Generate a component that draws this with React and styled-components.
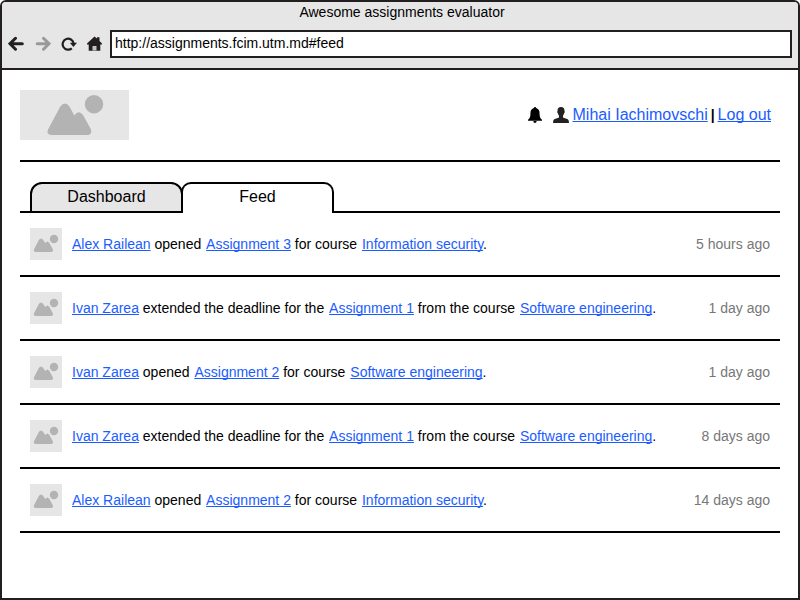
import React from "react";
import styled, { createGlobalStyle } from "styled-components";

const ink = "#231f20";
const shade = "#e6e6e6";

const GlobalStyle = createGlobalStyle`
  *, *::before, *::after { box-sizing: border-box; }
  body {
    margin: 0;
    background: #fff;
    color: #000;
    font: 14px/20px "Liberation Sans", Arial, sans-serif;
  }
`;

const BrowserWindow = styled.div`
  display: flex;
  flex-direction: column;
  min-height: 100vh;
  border: 2px solid ${ink};
  border-radius: 6px 6px 0 0;
  overflow: hidden;
`;

const Chrome = styled.header`
  padding-bottom: 10px;
  background: ${shade};
  border-bottom: 2px solid ${ink};
`;

const WindowTitle = styled.div`
  height: 28px;
  padding-left: 4px;
  text-align: center;
`;

const Toolbar = styled.div`
  display: flex;
  align-items: center;
  gap: 8px;
  padding: 0 6px;
`;

const Buttons = styled.div`
  display: flex;
  gap: 10px;
`;

const ToolButton = styled.button`
  display: flex;
  padding: 0;
  border: 0;
  background: none;
  color: ${({ $muted }) => ($muted ? "#999" : ink)};
`;

const Address = styled.input`
  flex: 1;
  min-width: 0;
  height: 28px;
  padding: 0 3px 2px;
  border: 2px solid ${ink};
  border-radius: 0;
  background: #fff;
  color: #000;
  font: inherit;
`;

const Page = styled.main`
  flex: 1;
  padding: 20px 18px;
`;

const Masthead = styled.div`
  display: flex;
  justify-content: space-between;
  align-items: center;
  padding: 0 9px 20px 0;
  border-bottom: 2px solid #000;
`;

const Picture = styled.svg`
  display: block;
  flex: none;
  background: ${shade};
  fill: #b3b3b3;
`;

const Account = styled.nav`
  display: flex;
  align-items: center;
  gap: 10px;
  font-size: 16px;
`;

const AccountGroup = styled.div`
  display: flex;
  align-items: center;
  gap: ${({ $tight }) => ($tight ? "3px" : "4px")};
`;

const AccountIcon = styled.svg`
  display: block;
`;

const Divider = styled.span`
  font-size: 14px;
  font-weight: bold;
`;

const Link = styled.a`
  color: #1a5cff;
  text-decoration: underline;
  text-decoration-thickness: 1px;
  text-decoration-skip-ink: none;
`;

const Tabs = styled.div`
  display: flex;
  margin-top: 20px;

  &::before, &::after {
    content: "";
    width: 10px;
    border-bottom: 2px solid #000;
  }
  &::after { flex: 1; }
`;

const Tab = styled.button`
  width: 153px;
  height: 31px;
  padding: ${({ $active }) => ($active ? "0 0 4px" : "0 0 2px")};
  border: 2px solid #000;
  border-bottom-width: ${({ $active }) => ($active ? "0" : "2px")};
  border-radius: ${({ $active }) => ($active ? "10px 10px 0 0" : "12px 12px 0 0")};
  background: ${({ $active }) => ($active ? "#fff" : shade)};
  color: #000;
  font: inherit;
  font-size: 16px;

  & + & { margin-left: -2px; }
`;

const FeedList = styled.ul`
  margin: 0;
  padding: 0;
  list-style: none;
`;

const FeedItem = styled.li`
  display: flex;
  align-items: center;
  gap: 10px;
  padding: 15px 10px;
  border-bottom: 2px solid #000;
`;

const Sentence = styled.p`
  flex: 1;
  margin: 0;

  a + a { margin-left: 1px; }
`;

const Time = styled.time`
  color: #777;
`;

const Placeholder = ({ width, height, label }) => (
  <Picture width={width} height={height} viewBox={`0 0 ${width} ${height}`} role="img" aria-label={label}>
    {width > 50 ? (
      <>
        <path d="M28.300 39 40.300 16.500Q45 10.500 49.500 16.500L54.300 25.500Q58.700 19.500 63 25L70.500 38.500C72.500 42.500 70.500 45 67.500 45H32.500C28.500 45 26.200 43 28.300 39Z" />
        <circle cx="74" cy="14.300" r="9.200" />
      </>
    ) : (
      <>
        <path d="M4.200 21 8.800 12Q11 8.800 13.200 12L15.300 15Q17.500 11.800 19.400 15L22.700 21Q23.800 24 21 24H6Q2.800 24 4.200 21Z" />
        <circle cx="24" cy="11" r="4.200" />
      </>
    )}
  </Picture>
);

const feed = [
  { who: "Alex Railean", verb: "opened", task: "Assignment 3", link: "for course", course: "Information security", when: "5 hours ago" },
  { who: "Ivan Zarea", verb: "extended the deadline for the", task: "Assignment 1", link: "from the course", course: "Software engineering", when: "1 day ago" },
  { who: "Ivan Zarea", verb: "opened", task: "Assignment 2", link: "for course", course: "Software engineering", when: "1 day ago" },
  { who: "Ivan Zarea", verb: "extended the deadline for the", task: "Assignment 1", link: "from the course", course: "Software engineering", when: "8 days ago" },
  { who: "Alex Railean", verb: "opened", task: "Assignment 2", link: "for course", course: "Information security", when: "14 days ago" },
];

export default function App() {
  return (
    <>
      <GlobalStyle />
      <BrowserWindow>
        <Chrome>
          <WindowTitle>Awesome assignments evaluator</WindowTitle>
          <Toolbar>
            <Buttons>
              <ToolButton aria-label="Back">
                <svg width="16" height="16" viewBox="0 0 16 16" fill="none" stroke="currentColor" strokeWidth="3" strokeLinecap="round">
                  <path d="M14.300 7.700H3M7.500 2.300 2 7.700l5.500 5.500" />
                </svg>
              </ToolButton>
              <ToolButton aria-label="Forward" $muted>
                <svg width="17" height="16" viewBox="0 0 17 16" fill="none" stroke="currentColor" strokeWidth="3" strokeLinecap="round">
                  <path d="M3.200 7.700H14M9.500 2.300 15 7.700l-5.500 5.500" />
                </svg>
              </ToolButton>
              <ToolButton aria-label="Reload">
                <svg width="16" height="16" viewBox="0 0 16 16" fill="none" stroke="currentColor" strokeWidth="2.200">
                  <path d="M10.800 12.300A5.500 5.500 0 1 1 12.600 7.300" />
                  <path d="M8.800 6.700H16L12.400 11Z" fill="currentColor" stroke="none" />
                </svg>
              </ToolButton>
              <ToolButton aria-label="Home">
                <svg width="15" height="16" viewBox="0 0 15 16" fill="currentColor">
                  <path d="M7.500 0.500 10 2.600V1.300h2.500V5L15 7.600V8.500H13.300V14.800H1.700V8.500H0V7.600Z" />
                  <path d="M5.500 10h4v4.600h-4Z" fill="#c4c4c4" />
                </svg>
              </ToolButton>
            </Buttons>
            <Address aria-label="Address" defaultValue="http://assignments.fcim.utm.md#feed" />
          </Toolbar>
        </Chrome>
        <Page>
          <Masthead>
            <Placeholder width={109} height={50} label="Logo" />
            <Account>
              <AccountIcon width="16" height="16" viewBox="0 0 16 16" role="img" aria-label="Notifications">
                <path d="M8 0Q9 0 9.200 1.100C12 2 12.600 4 12.600 7c0 3 .7 4.300 2.400 5.700V13.700H1V12.700C2.700 11.300 3.400 10 3.400 7c0-3 .6-5 3.400-5.900Q7 0 8 0ZM6.300 14h3.400q-.2 2-1.700 2t-1.700-2Z" />
              </AccountIcon>
              <AccountGroup>
                <AccountIcon width="16" height="16" viewBox="0 0 16 16" fill="#222" role="img" aria-label="User">
                  <path d="M8 0C10.500 0 11.500 1.500 11.500 4c.5.5.3 1.800-.4 2.300-.3 1.200-.7 1.800-1.100 2.400V10.500L14.800 12.300Q16 13 16 16H0Q0 13 1.200 12.300L6 10.500V8.700C5.600 8.100 5.200 7.500 4.900 6.300 4.200 5.800 4 4.500 4.500 4 4.500 1.500 5.500 0 8 0Z" />
                </AccountIcon>
                <AccountGroup $tight>
                  <Link href="#profile">Mihai Iachimovschi</Link>
                  <Divider>|</Divider>
                  <Link href="#logout">Log out</Link>
                </AccountGroup>
              </AccountGroup>
            </Account>
          </Masthead>
          <Tabs role="tablist">
            <Tab role="tab" aria-selected="false">Dashboard</Tab>
            <Tab role="tab" aria-selected="true" $active>Feed</Tab>
          </Tabs>
          <FeedList>
            {feed.map((item, i) => (
              <FeedItem key={i}>
                <Placeholder width={32} height={32} label={item.who} />
                <Sentence>
                  <Link href="#user">{item.who}</Link> {item.verb} <Link href="#assignment">{item.task}</Link>{" "}
                  {item.link} <Link href="#course">{item.course}</Link>.
                </Sentence>
                <Time>{item.when}</Time>
              </FeedItem>
            ))}
          </FeedList>
        </Page>
      </BrowserWindow>
    </>
  );
}
